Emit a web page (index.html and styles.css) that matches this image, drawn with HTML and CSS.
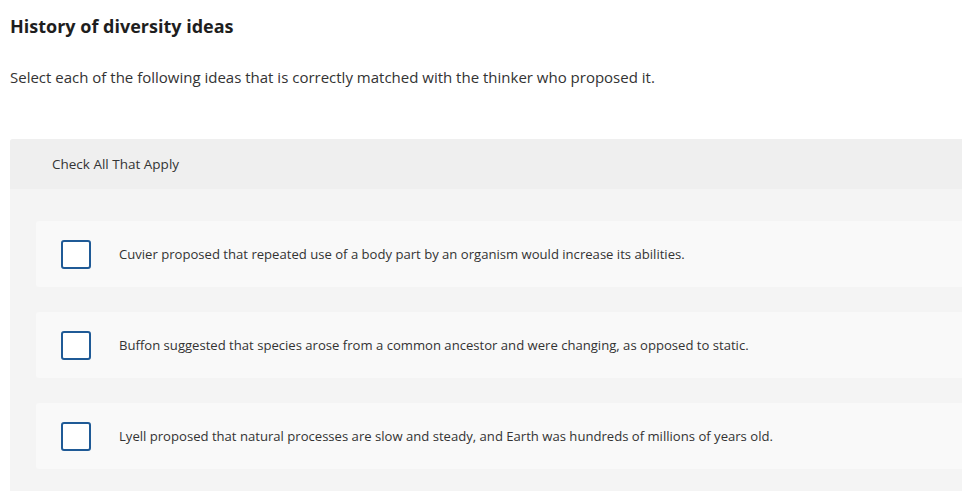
FILE: index.html
```html
<!DOCTYPE html>
<html>
<head>
<meta charset="utf-8">
<link rel="stylesheet" href="styles.css">
</head>
<body>
<div class="page">
  <h1 class="title">History of diversity ideas</h1>
  <p class="prompt">Select each of the following ideas that is correctly matched with the thinker who proposed it.</p>
  <div class="panel">
    <div class="panel-head">Check All That Apply</div>
    <div class="panel-body">
      <label class="option"><span class="box"></span><span class="opt-text">Cuvier proposed that repeated use of a body part by an organism would increase its abilities.</span></label>
      <label class="option"><span class="box"></span><span class="opt-text">Buffon suggested that species arose from a common ancestor and were changing, as opposed to static.</span></label>
      <label class="option"><span class="box"></span><span class="opt-text">Lyell proposed that natural processes are slow and steady, and Earth was hundreds of millions of years old.</span></label>
    </div>
  </div>
</div>
</body>
</html>
```
FILE: styles.css
```css
html, body {
  margin: 0;
  padding: 0;
  background: #ffffff;
  overflow: hidden;
}
body {
  font-family: "Open Sans", Lato, sans-serif;
  color: #2b2b2b;
}
.page {
  padding: 14px 0 0 10px;
}
.title {
  margin: 0;
  font-size: 18px;
  line-height: 24px;
  font-weight: 700;
  color: #1e1e1e;
}
.prompt {
  margin: 29px 0 0 0;
  font-size: 15px;
  line-height: 20px;
  color: #333;
}
.panel {
  margin-top: 52px;
  margin-right: -40px;
  background: #f4f4f4;
  border-radius: 3px 0 0 0;
}
.panel-head {
  height: 50px;
  background: #efefef;
  display: flex;
  align-items: center;
  padding-left: 42px;
  font-size: 13.5px;
  color: #333;
  border-radius: 3px 0 0 0;
}
.panel-body {
  padding: 32px 0 30px 26px;
  display: flex;
  flex-direction: column;
  gap: 25px;
}
.option {
  height: 66px;
  background: #f9f9f9;
  border-radius: 3px 0 0 3px;
  display: flex;
  align-items: center;
  padding-left: 25px;
}
.box {
  width: 26px;
  height: 25px;
  border: 2px solid #1f5a96;
  border-radius: 3px;
  background: #fff;
  flex: none;
}
.opt-text {
  margin-left: 28px;
  font-size: 13.1px;
  color: #333;
}
```
